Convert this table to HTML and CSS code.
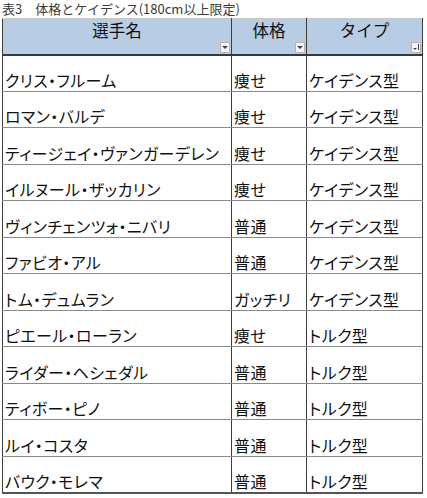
FILE: index.html
```html
<!DOCTYPE html>
<html lang="ja">
<head>
<meta charset="utf-8">
<link rel="stylesheet" href="styles.css">
</head>
<body>
<div class="title">表3　体格とケイデンス(180cm以上限定)</div>
<table class="sheet">
  <colgroup>
    <col class="c1"><col class="c2"><col class="c3">
  </colgroup>
  <thead>
    <tr>
      <th>選手名<span class="dd"><span class="tri"></span></span></th>
      <th>体格<span class="dd"><span class="tri"></span></span></th>
      <th>タイプ<span class="dd sort"><span class="tri small"></span><span class="bar"></span></span></th>
    </tr>
  </thead>
  <tbody>
    <tr><td>クリス・フルーム</td><td>痩せ</td><td>ケイデンス型</td></tr>
    <tr><td>ロマン・バルデ</td><td>痩せ</td><td>ケイデンス型</td></tr>
    <tr><td>ティージェイ・ヴァンガーデレン</td><td>痩せ</td><td>ケイデンス型</td></tr>
    <tr><td>イルヌール・ザッカリン</td><td>痩せ</td><td>ケイデンス型</td></tr>
    <tr><td>ヴィンチェンツォ・ニバリ</td><td>普通</td><td>ケイデンス型</td></tr>
    <tr><td>ファビオ・アル</td><td>普通</td><td>ケイデンス型</td></tr>
    <tr><td>トム・デュムラン</td><td>ガッチリ</td><td>ケイデンス型</td></tr>
    <tr><td>ピエール・ローラン</td><td>痩せ</td><td>トルク型</td></tr>
    <tr><td>ライダー・ヘシェダル</td><td>普通</td><td>トルク型</td></tr>
    <tr><td>ティボー・ピノ</td><td>普通</td><td>トルク型</td></tr>
    <tr><td>ルイ・コスタ</td><td>普通</td><td>トルク型</td></tr>
    <tr><td>バウク・モレマ</td><td>普通</td><td>トルク型</td></tr>
  </tbody>
</table>
</body>
</html>
```
FILE: styles.css
```css
html, body {
  margin: 0;
  padding: 0;
  background: #ffffff;
}
body {
  font-family: "Noto Sans CJK JP", "Noto Sans", sans-serif;
  color: #111111;
}
.title {
  height: 18px;
  line-height: 17px;
  padding-left: 2px;
  font-size: 13px;
  color: #3a3a3a;
  white-space: nowrap;
  overflow: hidden;
}
.sheet {
  margin-left: 2px;
  border-collapse: collapse;
  table-layout: fixed;
  width: 420px;
}
.c1 { width: 229px; }
.c2 { width: 75px; }
.c3 { width: 116px; }
th {
  position: relative;
  height: 36px;
  box-sizing: border-box;
  background: #b8cce4;
  border-top: 1px solid #c8c8c8;
  border-left: 1px solid #3c3c3c;
  border-right: 1px solid #3c3c3c;
  border-bottom: 2px solid #2c3a4e;
  font-weight: normal;
  font-size: 16.5px;
  line-height: 20px;
  padding: 0 0 12px 0;
  text-align: center;
  vertical-align: middle;
  color: #111111;
}
td {
  height: 36.5px;
  box-sizing: border-box;
  border-left: 1px solid #3c3c3c;
  border-right: 1px solid #3c3c3c;
  border-bottom: 1px solid #8a8a8a;
  font-size: 16px;
  line-height: 18px;
  letter-spacing: 0.4px;
  padding: 0 0 2px 2px;
  vertical-align: bottom;
  white-space: nowrap;
  overflow: hidden;
  font-feature-settings: "palt" 1;
}
tbody tr:last-child td {
  border-bottom: 2px solid #555555;
}
.dd {
  position: absolute;
  right: 1px;
  bottom: 1px;
  width: 8px;
  height: 9px;
  background: #f4f4f4;
  border: 1px solid #b4b4b4;
  display: flex;
  align-items: center;
  justify-content: center;
}
.tri {
  width: 0;
  height: 0;
  border-left: 3px solid transparent;
  border-right: 3px solid transparent;
  border-top: 3px solid #444444;
}
.tri.small {
  border-left-width: 2px;
  border-right-width: 2px;
  border-top-width: 2px;
  margin-top: 4px;
}
.bar {
  width: 1px;
  height: 6px;
  background: #444444;
  margin-left: 1px;
}
```
